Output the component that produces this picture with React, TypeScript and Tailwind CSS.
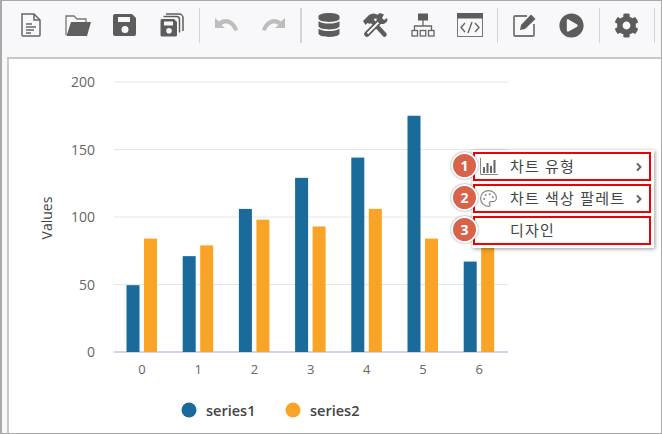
import { FaCog, FaDatabase, FaPlayCircle } from "react-icons/fa";
import { ChevronRight, Palette } from "lucide-react";
import type { ReactNode } from "react";

const FONT = '"Open Sans", "Noto Sans CJK KR", sans-serif';

const series1 = [49.5, 71, 106, 129, 144, 175, 67];
const series2 = [84, 79, 98, 93, 106, 84, 84];
const BLUE = "#1a6a9a";
const ORANGE = "#f9a427";

function FileIcon() {
  return (
    <svg width="22" height="24" viewBox="0 0 22 24" fill="none" stroke="#666" strokeWidth="1.5">
      <path d="M2 1h12l6 6v15a1 1 0 0 1-1 1H3a1 1 0 0 1-1-1z" />
      <path d="M14 1v6h6" />
      <path d="M6 11h6M6 14h10M6 17h8M6 20h5" strokeWidth="1.3" />
    </svg>
  );
}

function FolderIcon() {
  return (
    <svg width="26" height="24" viewBox="0 0 26 24">
      <path d="M1 22V3h8l3 3h9v3" fill="none" stroke="#777" strokeWidth="1.3" />
      <path d="M6 9h20l-4 14H1.500z" fill="#5f5f5f" />
    </svg>
  );
}

function SaveIcon() {
  return (
    <svg width="24" height="24" viewBox="0 0 24 24">
      <path
        fillRule="evenodd"
        d="M2 1h17l4 4v16a2 2 0 0 1-2 2H2a2 2 0 0 1-2-2V3a2 2 0 0 1 2-2zM5 4v5h12V4zM12 13a3.500 3.500 0 1 0 0 7 3.500 3.500 0 0 0 0-7z"
        fill="#5c5c5c"
      />
    </svg>
  );
}

function SaveAllIcon() {
  return (
    <svg width="24" height="24" viewBox="0 0 24 24">
      <path d="M6 1h13a4 4 0 0 1 4 4v13" fill="none" stroke="#5c5c5c" strokeWidth="1.5" />
      <path d="M3.500 3.500h13a3 3 0 0 1 3 3v13" fill="none" stroke="#5c5c5c" strokeWidth="1.5" />
      <path
        fillRule="evenodd"
        d="M2 6h12l3 3v13a1.500 1.500 0 0 1-1.500 1.500H2A1.500 1.500 0 0 1 .500 22V7.500A1.500 1.500 0 0 1 2 6zM4 8.500v4h9v-4zM9 15a2.800 2.800 0 1 0 0 5.600A2.800 2.800 0 0 0 9 15z"
        fill="#5c5c5c"
      />
    </svg>
  );
}

function UndoIcon({ flip }: { flip?: boolean }) {
  return (
    <svg width="25" height="16" viewBox="0 0 25 16" className={flip ? "-scale-x-100" : ""}>
      <path d="M1 1v10h10L7.500 8c4-3 9.500-2 13 6l3.500-1C21 3 12-1 5 4.500z" fill="#bdbdbd" />
    </svg>
  );
}

function ToolsIcon() {
  return (
    <svg width="27" height="26" viewBox="0 0 27 26">
      {/* hammer */}
      <path d="M1 9l6-6c3-2 6-2 9 0l-1 3-3 1-4 5-2.500-1-2 2z" fill="#5c5c5c" />
      <path d="M10.500 9.500L22.500 22.500" stroke="#5c5c5c" strokeWidth="4.500" strokeLinecap="round" />
      {/* wrench */}
      <path d="M5 22L18 9" stroke="#5c5c5c" strokeWidth="5.500" strokeLinecap="round" />
      <path d="M5.500 21.500L17 10" stroke="#f8f8fa" strokeWidth="2" />
      <path d="M18 1a6 6 0 0 0-3 8l2.500 2.500a6 6 0 0 0 8-3l-.5-2.500-3 2-2-2 2-3.500z" fill="#5c5c5c" />
    </svg>
  );
}

function SitemapIcon() {
  return (
    <svg width="24" height="24" viewBox="0 0 24 24" fill="none" stroke="#666" strokeWidth="1.3">
      <rect x="7" y="0.500" width="10" height="7" fill="#5c5c5c" stroke="none" />
      <path d="M12 7v6M3.500 17v-4h17v4" />
      <rect x="1" y="17.500" width="5.500" height="5.500" />
      <rect x="9.250" y="17.500" width="5.500" height="5.500" />
      <rect x="17.500" y="17.500" width="5.500" height="5.500" />
    </svg>
  );
}

function CodeIcon() {
  return (
    <svg width="26" height="24" viewBox="0 0 26 24" fill="none">
      <rect x="0.500" y="0.500" width="25" height="23" stroke="#777" />
      <rect x="0" y="0" width="26" height="5.500" fill="#5c5c5c" />
      <path d="M8 10l-4 4.500 4 4.500M18 10l4 4.500-4 4.500M15 9l-4 11" stroke="#666" strokeWidth="1.400" />
    </svg>
  );
}

function EditIcon() {
  return (
    <svg width="23" height="24" viewBox="0 0 23 24" fill="none">
      <path d="M14 3H2a1 1 0 0 0-1 1v18a1 1 0 0 0 1 1h18a1 1 0 0 0 1-1V11" stroke="#777" strokeWidth="1.800" />
      <path d="M7 17l1-5L18 1.500 22.500 6 12 16z" fill="#5c5c5c" />
    </svg>
  );
}

function BarsIcon() {
  return (
    <svg width="18" height="17" viewBox="0 0 18 17">
      <path d="M.500 0v16.500H18" fill="none" stroke="#888" />
      <rect x="3" y="9" width="2" height="6" fill="#666" />
      <rect x="6.500" y="5" width="2" height="10" fill="#666" />
      <rect x="10" y="8" width="2" height="7" fill="#666" />
      <rect x="13.500" y="2" width="2" height="13" fill="#666" />
    </svg>
  );
}

function ToolButton({ children }: { children: ReactNode }) {
  return <button className="flex h-[24px] w-[47px] shrink-0 items-center justify-center">{children}</button>;
}

function Sep({ thick }: { thick?: boolean }) {
  return (
    <div
      className={
        thick
          ? "ml-[3px] mr-[3px] h-[35px] w-[2px] shrink-0 bg-[#d4d4d6]"
          : "ml-[4px] mr-[3px] h-[35px] w-px shrink-0 bg-[#d4d4d6]"
      }
    />
  );
}

function Toolbar() {
  return (
    <div className="flex h-[56px] shrink-0 items-center pb-[8px] pl-[5px]">
      <ToolButton><FileIcon /></ToolButton>
      <ToolButton><FolderIcon /></ToolButton>
      <ToolButton><SaveIcon /></ToolButton>
      <ToolButton><SaveAllIcon /></ToolButton>
      <Sep />
      <ToolButton><UndoIcon /></ToolButton>
      <ToolButton><UndoIcon flip /></ToolButton>
      <Sep thick />
      <ToolButton><FaDatabase size={24} color="#5c5c5c" /></ToolButton>
      <ToolButton><ToolsIcon /></ToolButton>
      <ToolButton><SitemapIcon /></ToolButton>
      <ToolButton><CodeIcon /></ToolButton>
      <Sep />
      <ToolButton><EditIcon /></ToolButton>
      <ToolButton><FaPlayCircle size={25} color="#5c5c5c" /></ToolButton>
      <Sep />
      <ToolButton><FaCog size={25} color="#5c5c5c" /></ToolButton>
      <Sep />
    </div>
  );
}

function Chart() {
  const y = (v: number) => 294 - v * 1.35;
  const ticks = [0, 50, 100, 150, 200];
  return (
    <svg width="652" height="374" viewBox="1 1 652 374" style={{ fontFamily: FONT }}>
      {ticks.map((t) => (
        <g key={t}>
          <line x1="106" x2="500" y1={y(t)} y2={y(t)} stroke={t === 0 ? "#ccd6eb" : "#e6e6e6"} strokeWidth={t === 0 ? 2 : 1} />
          <text x="87" y={y(t) + 5} textAnchor="end" fontSize="14" fill="#666">{t}</text>
        </g>
      ))}
      {series1.map((v, i) => {
        const x = 118.500 + i * 56.2;
        return (
          <g key={i}>
            <rect x={x} y={y(v)} width="13" height={v * 1.35} fill={BLUE} />
            <rect x={x + 17.500} y={y(series2[i])} width="13" height={series2[i] * 1.35} fill={ORANGE} />
            <text x={x + 15.500} y="316" textAnchor="middle" fontSize="13" fill="#666">{i}</text>
          </g>
        );
      })}
      <text transform="translate(44 160) rotate(-90)" textAnchor="middle" fontSize="14" fill="#444">Values</text>
      <circle cx="181" cy="352" r="7.500" fill={BLUE} />
      <text x="198" y="357.500" fontSize="14.500" fontWeight="600" fill="#444">series1</text>
      <circle cx="285" cy="352" r="7.500" fill={ORANGE} />
      <text x="302" y="357.500" fontSize="14.500" fontWeight="600" fill="#444">series2</text>
    </svg>
  );
}

function MenuRow({ n, icon, label, arrow }: { n: number; icon?: ReactNode; label: string; arrow?: boolean }) {
  return (
    <div className="relative flex h-[29px] w-[178px] items-center border-2 border-[#f00000] pr-[4px]">
      <div className="absolute left-[-24px] top-[-2px] flex h-[27px] w-[27px] items-center justify-center rounded-full border-2 border-white bg-[#d9634a] text-[14px] font-bold text-white shadow-[0_0_2px_rgba(0,0,0,0.5)]">
        {n}
      </div>
      <div className="flex w-[35px] shrink-0 justify-end pr-[12px]">{icon}</div>
      <span className="flex-1 text-[15px] tracking-[1.2px] text-[#444]">{label}</span>
      {arrow && <ChevronRight size={12} strokeWidth={4} color="#666" />}
    </div>
  );
}

function ContextMenu() {
  return (
    <div className="absolute left-[470px] top-[149px] flex h-[98px] w-[182px] flex-col gap-[3px] bg-white py-[2px] pl-px shadow-[1px_1px_4px_rgba(0,0,0,0.4)]">
      <MenuRow n={1} icon={<BarsIcon />} label="차트 유형" arrow />
      <MenuRow n={2} icon={<Palette size={19} color="#888" strokeWidth={1.5} />} label="차트 색상 팔레트" arrow />
      <MenuRow n={3} label="디자인" />
    </div>
  );
}

export default function App() {
  return (
    <div className="relative flex h-[434px] w-[662px] flex-col overflow-hidden border border-l-2 border-[#a9a9a9] bg-[#f8f8fa]" style={{ fontFamily: FONT }}>
      <Toolbar />
      <div className="ml-[5px] flex-1 border-l-2 border-t-2 border-[#c8c8c8] bg-white">
        <Chart />
      </div>
      <ContextMenu />
    </div>
  );
}
